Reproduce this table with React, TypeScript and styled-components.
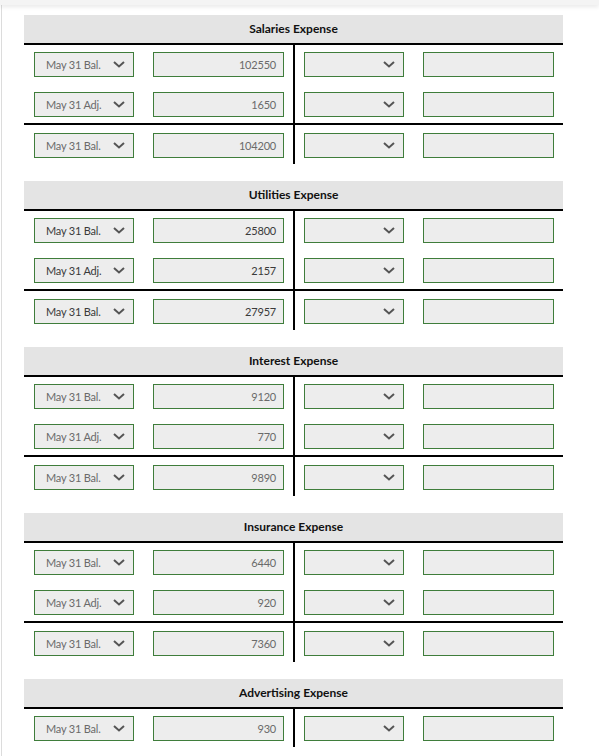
import React from 'react';
import styled, { createGlobalStyle } from 'styled-components';

const GlobalStyle = createGlobalStyle`
  body {
    margin: 0;
    background: #ffffff;
    font-family: Lato, 'Liberation Sans', sans-serif;
  }
`;

const TopBar = styled.div`
  height: 5px;
  background: #f4f4f4;
  box-shadow: 0 2px 4px rgba(0, 0, 0, 0.09);
  position: relative;
`;

const Frame = styled.div`
  margin-left: 1px;
  border-left: 1px solid #dcdcdc;
  padding: 10px 0 0 22px;
  min-height: 760px;
`;

const Account = styled.section`
  width: 539px;
  margin-bottom: 17px;
`;

const Title = styled.h3`
  margin: 0;
  height: 28px;
  line-height: 28px;
  background: #e4e4e4;
  border-bottom: 2px solid #000;
  text-align: center;
  font-size: 12px;
  font-weight: 700;
  color: #111;
`;

const Ledger = styled.div`
  display: grid;
  grid-template-columns: 271px 268px;
`;

const Cell = styled.div<{ $left?: boolean; $total?: boolean }>`
  display: flex;
  flex-direction: column;
  gap: 15px;
  padding: ${(p) => (p.$total ? '8px' : '7px')} 9px 6px ${(p) => (p.$left ? '10px' : '9px')};
  border-right: ${(p) => (p.$left ? '2px solid #000' : 'none')};
  border-top: ${(p) => (p.$total ? '2px solid #000' : 'none')};
`;

const Entry = styled.div`
  display: flex;
  gap: 19px;
  height: 25px;
`;

const Select = styled.div<{ $dark?: boolean }>`
  box-sizing: border-box;
  width: 100px;
  height: 25px;
  display: flex;
  align-items: center;
  justify-content: space-between;
  padding: 0 8px 0 11px;
  background: #ededed;
  border: 1px solid #3f7d3b;
  font-size: 11px;
  letter-spacing: -0.2px;
  color: ${(p) => (p.$dark ? '#3a3a3a' : '#6a6a6a')};
`;

const Amount = styled.div<{ $dark?: boolean }>`
  box-sizing: border-box;
  width: 131px;
  height: 25px;
  line-height: 23px;
  padding: 0 7px;
  text-align: right;
  background: #ededed;
  border: 1px solid #3f7d3b;
  font-size: 11px;
  letter-spacing: -0.2px;
  color: ${(p) => (p.$dark ? '#3a3a3a' : '#6a6a6a')};
`;

const Chevron = () => (
  <svg width="12" height="7" viewBox="0 0 12 7" style={{ marginLeft: 'auto' }}>
    <polyline points="1,1 6,5.5 11,1" fill="none" stroke="#555" strokeWidth="2" />
  </svg>
);

type Line = [string, string];

interface AccountData {
  title: string;
  debits: Line[];
  total?: Line;
  dark?: boolean;
}

const accounts: AccountData[] = [
  {
    title: 'Salaries Expense',
    debits: [
      ['May 31 Bal.', '102550'],
      ['May 31 Adj.', '1650'],
    ],
    total: ['May 31 Bal.', '104200'],
  },
  {
    title: 'Utilities Expense',
    debits: [
      ['May 31 Bal.', '25800'],
      ['May 31 Adj.', '2157'],
    ],
    total: ['May 31 Bal.', '27957'],
    dark: true,
  },
  {
    title: 'Interest Expense',
    debits: [
      ['May 31 Bal.', '9120'],
      ['May 31 Adj.', '770'],
    ],
    total: ['May 31 Bal.', '9890'],
  },
  {
    title: 'Insurance Expense',
    debits: [
      ['May 31 Bal.', '6440'],
      ['May 31 Adj.', '920'],
    ],
    total: ['May 31 Bal.', '7360'],
  },
  {
    title: 'Advertising Expense',
    debits: [['May 31 Bal.', '930']],
  },
];

const EntryRow = ({ line, dark }: { line?: Line; dark?: boolean }) => (
  <Entry>
    <Select $dark={dark}>
      {line ? <span>{line[0]}</span> : null}
      <Chevron />
    </Select>
    <Amount $dark={dark}>{line ? line[1] : ''}</Amount>
  </Entry>
);

const TAccount = ({ data }: { data: AccountData }) => (
  <Account>
    <Title>{data.title}</Title>
    <Ledger>
      <Cell $left>
        {data.debits.map((d, i) => (
          <EntryRow key={i} line={d} dark={data.dark} />
        ))}
      </Cell>
      <Cell>
        {data.debits.map((_, i) => (
          <EntryRow key={i} dark={data.dark} />
        ))}
      </Cell>
      {data.total && (
        <>
          <Cell $left $total>
            <EntryRow line={data.total} dark={data.dark} />
          </Cell>
          <Cell $total>
            <EntryRow dark={data.dark} />
          </Cell>
        </>
      )}
    </Ledger>
  </Account>
);

const App = () => {
  return (
    <>
      <GlobalStyle />
      <TopBar />
      <Frame>
        {accounts.map((a) => (
          <TAccount key={a.title} data={a} />
        ))}
      </Frame>
    </>
  );
};

export default App;
